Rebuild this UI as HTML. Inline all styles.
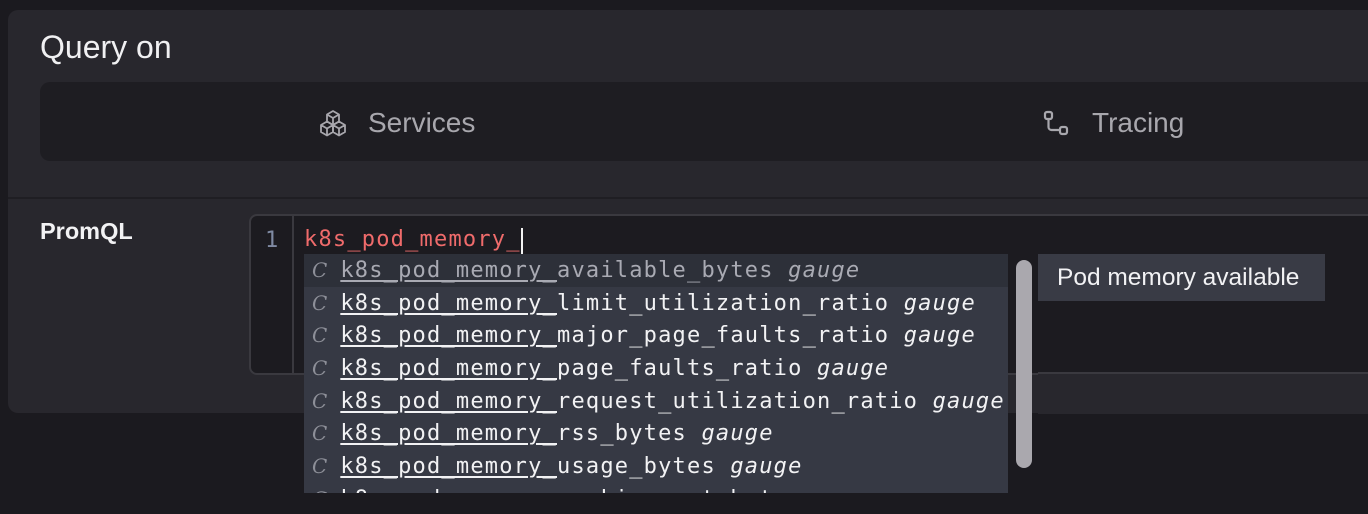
<!DOCTYPE html>
<html><head><meta charset="utf-8"><style>
body{margin:0;width:1368px;height:514px;background:#1b1a1f;overflow:hidden;position:relative;font-family:"Liberation Sans",sans-serif}
.card{position:absolute;left:8px;top:10px;width:1380px;height:403px;background:#28272d;border-radius:10px}
.top{position:absolute;left:0;top:0;width:100%;height:187px;border-bottom:2px solid #1f1e23}
h1{position:absolute;left:32px;top:19px;margin:0;font-size:32px;font-weight:normal;color:#f0f0f2}
.tabs{position:absolute;left:32px;top:72px;width:1360px;height:79px;background:#1e1d22;border-radius:10px}
.tab{position:absolute;font-size:28px;color:#a8a7ad}
.lbl{position:absolute;left:32px;top:208px;font-size:23.5px;font-weight:bold;color:#f2f2f4}
.ed{position:absolute;left:249px;top:214px;width:1130px;height:157px;background:#1c1b20;border:2px solid #3a393f;border-right:none;border-radius:8px 0 0 8px}
.gut{position:absolute;left:0;top:0;width:41px;height:100%;border-right:2px solid #3a393f}
.mono{font-family:"DejaVu Sans Mono","Liberation Mono",monospace;font-size:22px;letter-spacing:1.2px}
.ln{position:absolute;left:14px;top:12px;color:#7f8aa3}
.code{position:absolute;left:304px;top:227px;color:#ef6b6b}
.cur{position:absolute;left:521px;top:228px;width:2px;height:26px;background:#f2f2f2}
.dd{position:absolute;left:304px;top:254px;width:704px;height:239px;background:#363944;overflow:hidden}
.row{height:32.7px;line-height:33px;color:#f2f2f4;white-space:nowrap;padding-left:8px}
.row.sel{background:#2d3039;color:#a9aab3}
.c{font-family:"DejaVu Serif","Liberation Serif",serif;font-style:italic;color:#8d8f98;font-size:20px;margin-right:13px;letter-spacing:0}
u{text-decoration:underline;text-underline-offset:3px}
i{font-style:italic}
.sb{position:absolute;left:1016px;top:260px;width:16px;height:208px;background:#aaa8ae;border-radius:8px}
.tip{position:absolute;left:1038px;top:254px;width:287px;height:47px;background:#393b45;color:#f2f2f4;font-size:24.5px;line-height:47px;box-sizing:border-box;padding-left:19px;white-space:nowrap}
.strip{position:absolute;left:1038px;top:372px;width:340px;height:40px;background:#28272d;border-top:2px solid #3a393f}
</style></head><body>
<div class="card">
 <div class="top">
  <h1>Query on</h1>
  <div class="tabs">
   <div class="tab" style="left:276px;top:25px"><svg width="34" height="34" viewBox="0 0 34 34" fill="none" stroke="#a8a7ad" stroke-width="1.8" stroke-linejoin="round" style="vertical-align:middle;margin-right:18px"><path d="M17 3l6 3.5v7L17 17l-6-3.5v-7z M11 6.5L17 10l6-3.5 M17 10v7"/><path d="M11 13.5l6 3.5v7l-6 3.5-6-3.5v-7z M5 17l6 3.5 6-3.5 M11 20.5v7"/><path d="M23 13.5l6 3.5v7l-6 3.5-6-3.5v-7z M17 17l6 3.5 6-3.5 M23 20.5v7"/></svg>Services</div>
   <div class="tab" style="left:1002px;top:25px"><svg width="30" height="30" viewBox="0 0 30 30" fill="none" stroke="#a8a7ad" stroke-width="2.2" style="vertical-align:middle;margin-right:20px"><rect x="3" y="2" width="7" height="7" rx="2"/><rect x="18" y="17" width="7" height="7" rx="2"/><path d="M6.5 9v8a3 3 0 0 0 3 3H18"/></svg>Tracing</div>
  </div>
 </div>
 <div class="lbl">PromQL</div>
</div>
<div class="ed"><div class="gut"></div><div class="ln mono">1</div></div>
<div class="code mono">k8s_pod_memory_</div>
<div class="cur"></div>
<div class="strip"></div>
<div class="dd mono">
 <div class="row sel"><span class="c">C</span><u>k8s_pod_memory_</u>available_bytes <i>gauge</i></div>
 <div class="row"><span class="c">C</span><u>k8s_pod_memory_</u>limit_utilization_ratio <i>gauge</i></div>
 <div class="row"><span class="c">C</span><u>k8s_pod_memory_</u>major_page_faults_ratio <i>gauge</i></div>
 <div class="row"><span class="c">C</span><u>k8s_pod_memory_</u>page_faults_ratio <i>gauge</i></div>
 <div class="row"><span class="c">C</span><u>k8s_pod_memory_</u>request_utilization_ratio <i>gauge</i></div>
 <div class="row"><span class="c">C</span><u>k8s_pod_memory_</u>rss_bytes <i>gauge</i></div>
 <div class="row"><span class="c">C</span><u>k8s_pod_memory_</u>usage_bytes <i>gauge</i></div>
 <div class="row"><span class="c">C</span><u>k8s_pod_memory_</u>working_set_bytes <i>gauge</i></div>
</div>
<div class="sb"></div>
<div class="tip">Pod memory available</div>
</body></html>
